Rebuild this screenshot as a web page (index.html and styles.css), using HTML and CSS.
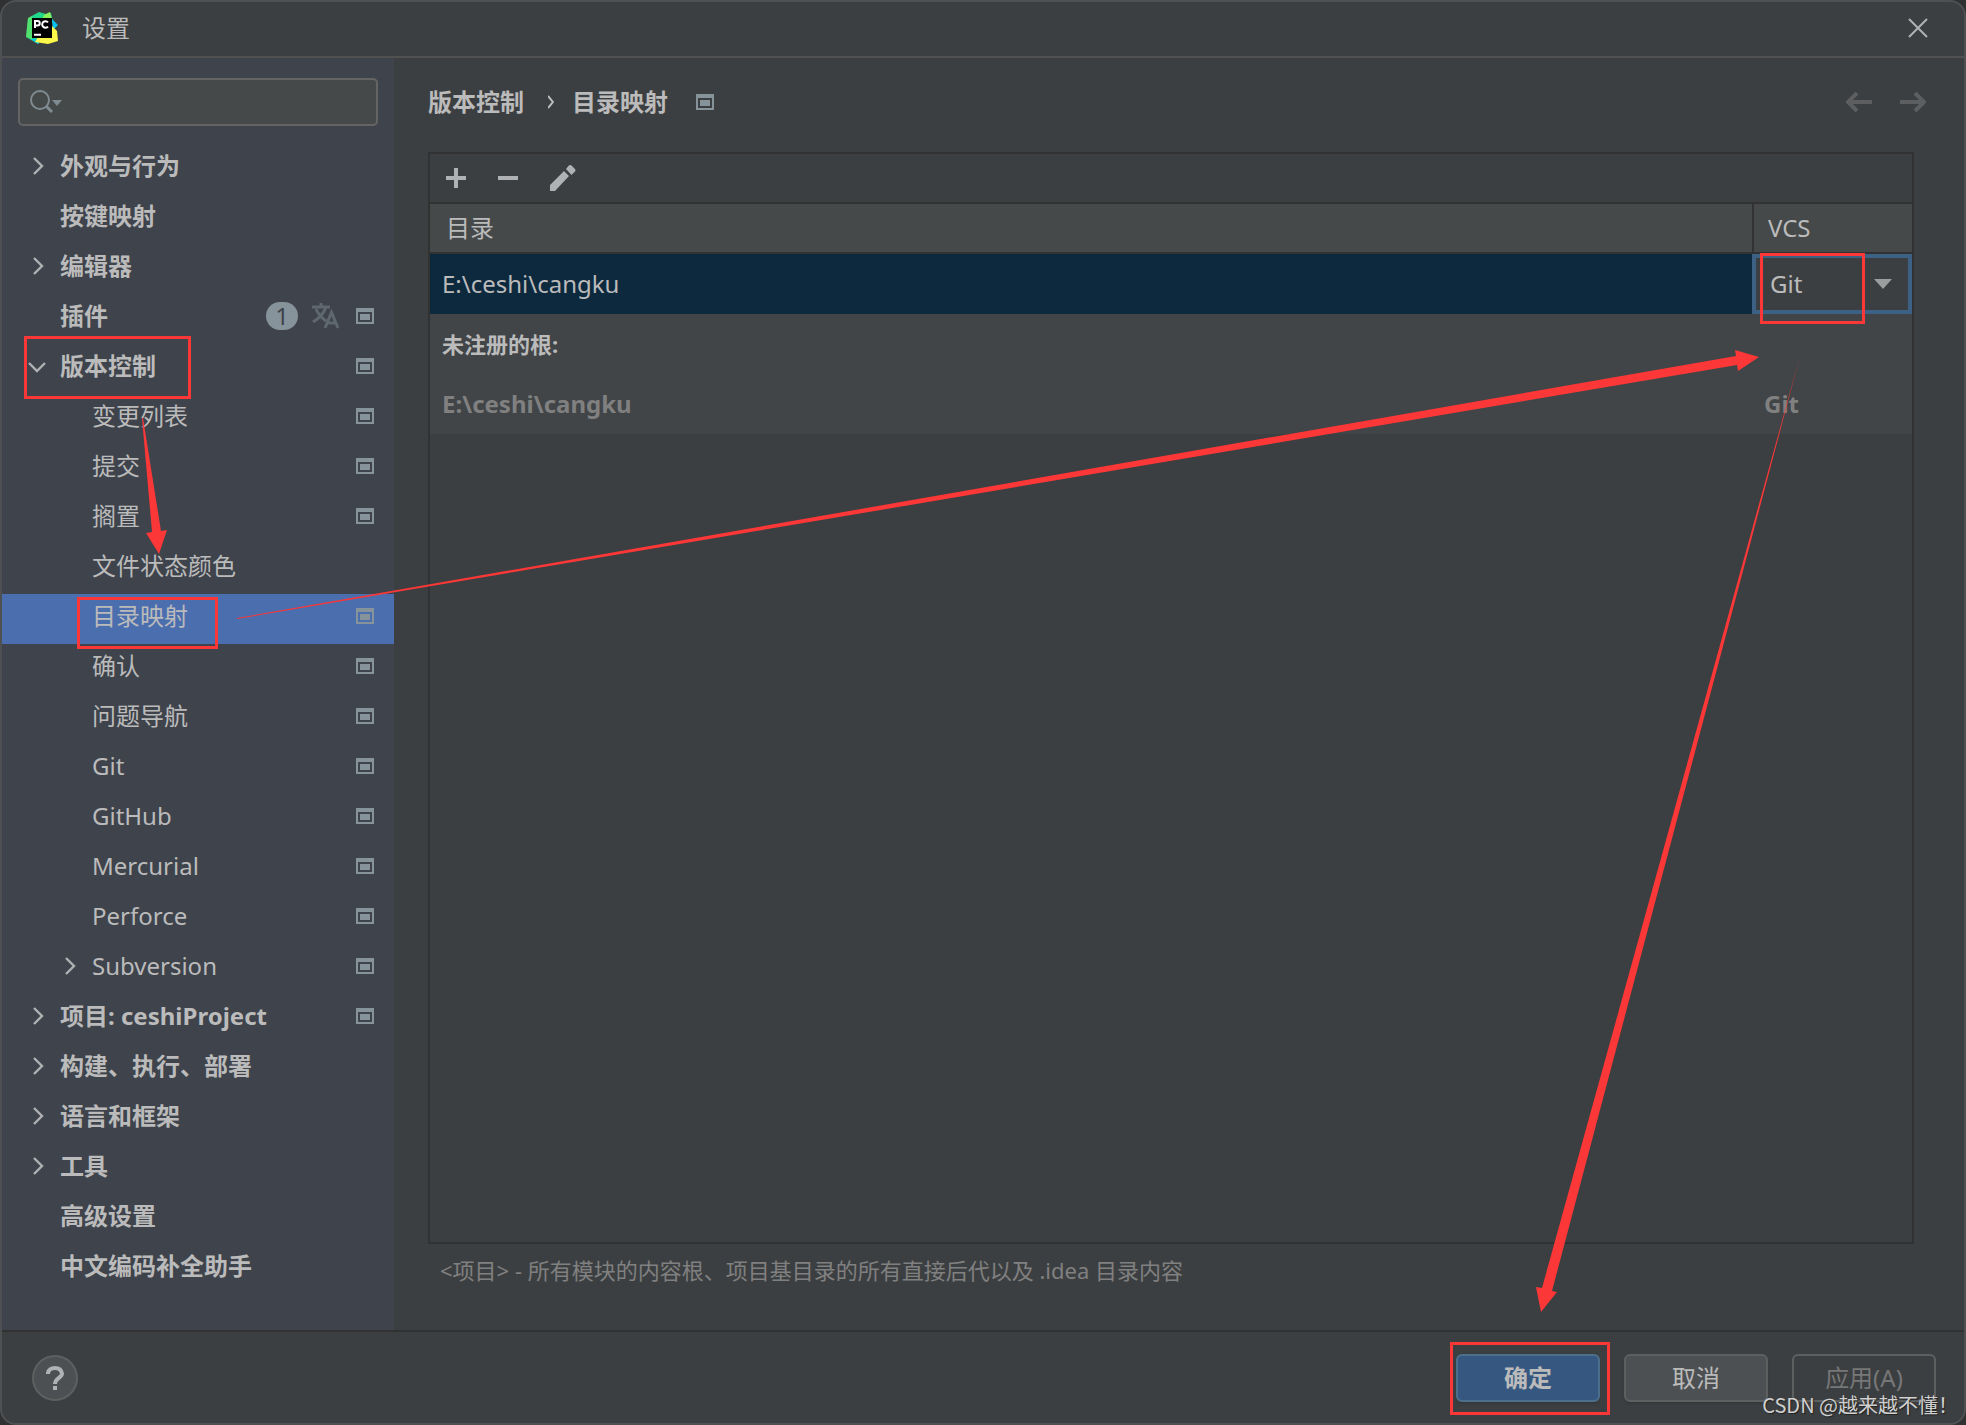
FILE: index.html
```html
<!DOCTYPE html>
<html lang="zh-CN">
<head>
<meta charset="utf-8">
<title>设置</title>
<link rel="stylesheet" href="styles.css">
</head>
<body>
<svg class="defs" aria-hidden="true">
  <symbol id="project" viewBox="0 0 18 16"><path fill="currentColor" fill-rule="evenodd" d="M0 0H18V16H0ZM2 4V14H16V4ZM4 6H14V12H4Z"/></symbol>
  <symbol id="chevron" viewBox="0 0 18 18"><path d="M6 1L14 9L6 17" fill="none" stroke="currentColor" stroke-width="2.400"/></symbol>
</svg>
<div class="window">
  <header class="titlebar">
    <svg class="logo" viewBox="0 0 32 32" aria-hidden="true">
      <path fill="#21d789" d="M2 6L13 0L20 2L25 1L27 10L12 32L0 25Z"/>
      <path fill="#7bea5a" d="M2 6L6 4V27L0 25Z" opacity=".55"/>
      <path fill="#8cf05a" d="M18 3L24 0L26 8L16 8Z"/>
      <path fill="#07c3f2" d="M26 7L32 13L27 18ZM5 27L12 32L16 27Z"/>
      <path fill="#fcf84a" d="M26 14L31 19L32 29L22 32L9 30L12 25Z"/>
      <rect x="6" y="6" width="20" height="20" fill="#000"/>
      <path fill="none" stroke="#fff" stroke-width="2" d="M9 16V9H11.500A2.200 2.200 0 0 1 11.500 13.500H9M22 10.300A3.300 3.300 0 1 0 22 14.600M8 22.700H15"/>
    </svg>
    <h1 class="title">设置</h1>
    <button class="icon-button close" aria-label="关闭"><svg width="20" height="20" viewBox="0 0 20 20"><path d="M1 1L19 19M19 1L1 19" stroke="currentColor" stroke-width="2"/></svg></button>
  </header>
  <div class="content">
    <aside class="sidebar">
      <label class="search">
        <svg width="34" height="26" viewBox="0 0 34 26" aria-hidden="true"><circle cx="10" cy="11" r="9" fill="none" stroke="currentColor" stroke-width="2"/><path d="M16 17L22 23" stroke="currentColor" stroke-width="3"/><path d="M22 11H32L27 17Z" fill="currentColor"/></svg>
        <input class="search-input" type="text" aria-label="搜索设置">
      </label>
      <ul class="tree">
        <li class="row group"><svg class="arrow"><use href="#chevron"/></svg><span class="name">外观与行为</span></li>
        <li class="row group"><span class="arrow"></span><span class="name">按键映射</span></li>
        <li class="row group"><svg class="arrow"><use href="#chevron"/></svg><span class="name">编辑器</span></li>
        <li class="row group"><span class="arrow"></span><span class="name">插件</span><span class="badge">1</span><svg class="translate" viewBox="0 0 28 26" aria-hidden="true"><path d="M0 4H18M9 0V4M14 4Q11 13 1 19M4 6Q7 13 14 18M13 25L19.500 9.500L26 25M15.500 20H24" fill="none" stroke="currentColor" stroke-width="3"/></svg><svg class="mark"><use href="#project"/></svg></li>
        <li class="row group"><svg class="arrow open"><use href="#chevron"/></svg><span class="name">版本控制</span><svg class="mark"><use href="#project"/></svg></li>
        <li class="row child"><span class="arrow"></span><span class="name">变更列表</span><svg class="mark"><use href="#project"/></svg></li>
        <li class="row child"><span class="arrow"></span><span class="name">提交</span><svg class="mark"><use href="#project"/></svg></li>
        <li class="row child"><span class="arrow"></span><span class="name">搁置</span><svg class="mark"><use href="#project"/></svg></li>
        <li class="row child"><span class="arrow"></span><span class="name">文件状态颜色</span></li>
        <li class="row child selected"><span class="arrow"></span><span class="name">目录映射</span><svg class="mark"><use href="#project"/></svg></li>
        <li class="row child"><span class="arrow"></span><span class="name">确认</span><svg class="mark"><use href="#project"/></svg></li>
        <li class="row child"><span class="arrow"></span><span class="name">问题导航</span><svg class="mark"><use href="#project"/></svg></li>
        <li class="row child"><span class="arrow"></span><span class="name">Git</span><svg class="mark"><use href="#project"/></svg></li>
        <li class="row child"><span class="arrow"></span><span class="name">GitHub</span><svg class="mark"><use href="#project"/></svg></li>
        <li class="row child"><span class="arrow"></span><span class="name">Mercurial</span><svg class="mark"><use href="#project"/></svg></li>
        <li class="row child"><span class="arrow"></span><span class="name">Perforce</span><svg class="mark"><use href="#project"/></svg></li>
        <li class="row child"><svg class="arrow"><use href="#chevron"/></svg><span class="name">Subversion</span><svg class="mark"><use href="#project"/></svg></li>
        <li class="row group"><svg class="arrow"><use href="#chevron"/></svg><span class="name">项目: ceshiProject</span><svg class="mark"><use href="#project"/></svg></li>
        <li class="row group"><svg class="arrow"><use href="#chevron"/></svg><span class="name">构建、执行、部署</span></li>
        <li class="row group"><svg class="arrow"><use href="#chevron"/></svg><span class="name">语言和框架</span></li>
        <li class="row group"><svg class="arrow"><use href="#chevron"/></svg><span class="name">工具</span></li>
        <li class="row group"><span class="arrow"></span><span class="name">高级设置</span></li>
        <li class="row group"><span class="arrow"></span><span class="name">中文编码补全助手</span></li>
      </ul>
    </aside>
    <main class="main">
      <nav class="crumbs">
        <span>版本控制</span>
        <svg class="crumb-arrow" viewBox="0 0 6 14" aria-hidden="true"><path d="M0 1L5 7L0 13" fill="none" stroke="currentColor" stroke-width="2"/></svg>
        <span>目录映射</span>
        <svg class="crumb-mark"><use href="#project"/></svg>
        <div class="history">
          <button class="icon-button" disabled aria-label="后退"><svg width="26" height="20" viewBox="0 0 26 20"><path d="M26 10H2M11 1L2 10L11 19" fill="none" stroke="currentColor" stroke-width="4"/></svg></button>
          <button class="icon-button" disabled aria-label="前进"><svg width="26" height="20" viewBox="0 0 26 20"><path d="M0 10H24M15 1L24 10L15 19" fill="none" stroke="currentColor" stroke-width="4"/></svg></button>
        </div>
      </nav>
      <section class="panel">
        <div class="toolbar">
          <button class="icon-button" aria-label="添加"><svg width="20" height="20" viewBox="0 0 20 20"><path d="M0 10H20M10 0V20" stroke="currentColor" stroke-width="4"/></svg></button>
          <button class="icon-button" aria-label="移除"><svg width="20" height="20" viewBox="0 0 20 20"><path d="M0 10H20" stroke="currentColor" stroke-width="4"/></svg></button>
          <button class="icon-button" aria-label="编辑"><svg width="26" height="26" viewBox="2 1 26 26"><path fill="currentColor" d="M2 21L16 7L21 12L7 27H2ZM18 5L20 2.500Q22 0 24 2L26.500 4.500Q28.500 6.500 26.500 8L23.500 11Z"/></svg></button>
        </div>
        <table class="mappings">
          <thead><tr><th scope="col">目录</th><th scope="col" class="vcs">VCS</th></tr></thead>
          <tbody>
            <tr class="active"><td>E:\ceshi\cangku</td><td class="vcs editor"><div class="combo"><select class="select" aria-label="VCS"><option>Git</option></select><svg class="caret" width="18" height="10" viewBox="0 0 18 10" aria-hidden="true"><path d="M0 0H18L9 10Z" fill="currentColor"/></svg></div></td></tr>
            <tr class="heading"><td colspan="2">未注册的根:</td></tr>
            <tr class="muted"><td>E:\ceshi\cangku</td><td class="vcs">Git</td></tr>
          </tbody>
        </table>
      </section>
      <p class="note">&lt;项目&gt; - 所有模块的内容根、项目基目录的所有直接后代以及 .idea 目录内容</p>
    </main>
  </div>
  <footer class="footer">
    <button class="help" aria-label="帮助"><svg width="18" height="24" viewBox="0 0 18 24"><path d="M2 8V7Q3 2 9 2T16 7.500C16 12 9 12 9 18M9 20V24" fill="none" stroke="currentColor" stroke-width="4"/></svg></button>
    <button class="button primary">确定</button>
    <button class="button">取消</button>
    <button class="button" disabled>应用(A)</button>
  </footer>
  <svg class="annotations" viewBox="0 0 1966 1425" preserveAspectRatio="none" aria-hidden="true">
    <g fill="none" stroke="#fb3737" stroke-width="3">
      <rect x="25.500" y="337.500" width="164" height="60"/>
      <rect x="78.500" y="598.500" width="138" height="49"/>
      <rect x="1761.500" y="254.500" width="102" height="68"/>
      <rect x="1451.500" y="1343.500" width="157" height="70"/>
    </g>
    <g fill="#fb3737">
      <path d="M142 418L152 532L146 533L159 554L167 530L161 531L143 418Z"/>
      <path d="M237 618L1736 356L1735 350L1759 357L1738 371L1737 365L237 619Z"/>
      <path d="M1800 356L1542 1288L1536 1287L1541 1312L1557 1292L1552 1291Z"/>
    </g>
  </svg>
  <div class="watermark">CSDN @越来越不懂<span class="mark-end">！</span></div>
</div>
</body>
</html>
```
FILE: styles.css
```css
* { box-sizing: border-box; }
body {
  margin: 0;
  background: #2f3133;
  color: #bbbbbb;
  font: 24px/32px "Noto Sans", "Noto Sans CJK SC", sans-serif;
}
.defs { position: absolute; width: 0; height: 0; }
.window {
  position: relative;
  display: flex;
  flex-direction: column;
  min-height: 100vh;
  background: #3c3f41;
  border: 2px solid #4e5051;
  border-radius: 16px;
  overflow: hidden;
}
.icon-button {
  display: flex;
  padding: 0;
  border: 0;
  background: none;
  color: #afb1b3;
}
.titlebar {
  display: flex;
  align-items: center;
  gap: 24px;
  height: 56px;
  padding: 0 36px 2px 24px;
  border-bottom: 2px solid #515151;
}
.logo { width: 32px; height: 32px; }
.title { margin: 0; font-size: 24px; font-weight: 400; line-height: 32px; }
.close { margin-left: auto; }
.content { display: flex; flex: 1; }
.sidebar {
  flex: none;
  width: 392px;
  padding: 20px 0 34px;
  background: #3e434c;
}
.search {
  display: flex;
  align-items: center;
  gap: 8px;
  height: 48px;
  margin: 0 16px 18px;
  padding: 0 10px;
  border: 2px solid #646464;
  border-radius: 5px;
  background: #45494a;
  color: #7f8b91;
}
.search-input {
  flex: 1;
  min-width: 0;
  border: 0;
  outline: 0;
  background: none;
  color: #bbbbbb;
  font: inherit;
}
.tree { margin: 0; padding: 0; list-style: none; }
.row {
  display: flex;
  align-items: center;
  gap: 14px;
  height: 50px;
  padding: 0 20px 6px 26px;
}
.group { font-weight: 700; }
.child { padding-left: 58px; }
.selected { background: #4b6eaf; }
.arrow { flex: none; width: 18px; height: 18px; color: #afb1b3; }
.open { transform: rotate(90deg); }
.name { flex: 1; white-space: nowrap; }
.mark { width: 18px; height: 16px; margin-left: 2px; color: #87939a; }
.badge {
  width: 32px;
  height: 28px;
  border-radius: 14px;
  background: #87939a;
  color: #3e434c;
  font-weight: 400;
  line-height: 28px;
  text-align: center;
}
.translate { width: 28px; height: 26px; color: #5f676f; }
.main {
  display: flex;
  flex: 1;
  flex-direction: column;
  min-width: 0;
  padding: 28px 50px 44px 34px;
}
.crumbs {
  display: flex;
  align-items: center;
  height: 32px;
  margin-bottom: 34px;
  font-weight: 700;
}
.crumb-arrow { width: 6px; height: 14px; margin: 0 18px 0 24px; }
.crumb-mark { width: 18px; height: 16px; margin-left: 28px; color: #87939a; }
.history { display: flex; gap: 28px; margin: 0 -12px 0 auto; }
.history .icon-button { color: #5c5e60; }
.panel { flex: 1; border: 2px solid #323232; }
.toolbar {
  display: flex;
  align-items: center;
  gap: 32px;
  height: 48px;
  padding: 0 16px;
}
.mappings {
  width: 100%;
  border-collapse: separate;
  border-spacing: 0;
  table-layout: fixed;
  text-align: left;
}
th {
  height: 52px;
  padding: 0 16px;
  border-top: 2px solid #323232;
  border-bottom: 2px solid #323232;
  background: #45494a;
  font-weight: 400;
}
th.vcs { padding-left: 14px; border-left: 2px solid #323232; }
td { height: 60px; padding: 0 12px; background: #414547; }
.vcs { width: 160px; }
.active td { background: #0d293e; }
.active .editor { padding: 0; }
.combo {
  display: flex;
  align-items: center;
  height: 60px;
  padding: 0 16px 0 14px;
  border: 4px solid #3d6185;
  background: #3c3f41;
}
.select {
  flex: 1;
  padding: 0;
  border: 0;
  outline: 0;
  appearance: none;
  background: none;
  color: #bbbbbb;
  font: inherit;
}
.caret { color: #9b9e9f; }
.heading td { font-size: 22px; font-weight: 700; }
.muted td { color: #808080; font-weight: 700; }
.note {
  margin: 10px 0 0;
  padding-left: 12px;
  color: #808080;
  font-size: 22px;
  line-height: 32px;
}
.footer {
  display: flex;
  align-items: center;
  gap: 24px;
  height: 93px;
  padding: 0 28px 0 30px;
  border-top: 2px solid #323232;
}
.help {
  display: grid;
  place-items: center;
  width: 46px;
  height: 46px;
  margin-right: auto;
  padding: 0;
  border: 2px solid #5e6060;
  border-radius: 50%;
  background: #4c5052;
  color: #afb1b3;
}
.button {
  width: 144px;
  height: 48px;
  padding: 0;
  border: 2px solid #5e6060;
  border-radius: 6px;
  background: #4c5052;
  color: #bbbbbb;
  font: inherit;
  box-shadow: 0 2px 2px #36393b;
}
.primary { border-color: #4c708c; background: #365880; font-weight: 700; }
.button:disabled { background: none; color: #777777; box-shadow: none; }
.annotations {
  position: absolute;
  inset: -2px;
  width: calc(100% + 4px);
  height: calc(100% + 4px);
  pointer-events: none;
}
.watermark {
  position: absolute;
  right: 6px;
  bottom: 2px;
  color: #d0d0d0;
  font: 20px/32px "Noto Sans CJK SC", sans-serif;
  text-shadow: 1px 1px 1px #222222;
}
.mark-end { font-family: "Noto Sans CJK TC", sans-serif; }
```
